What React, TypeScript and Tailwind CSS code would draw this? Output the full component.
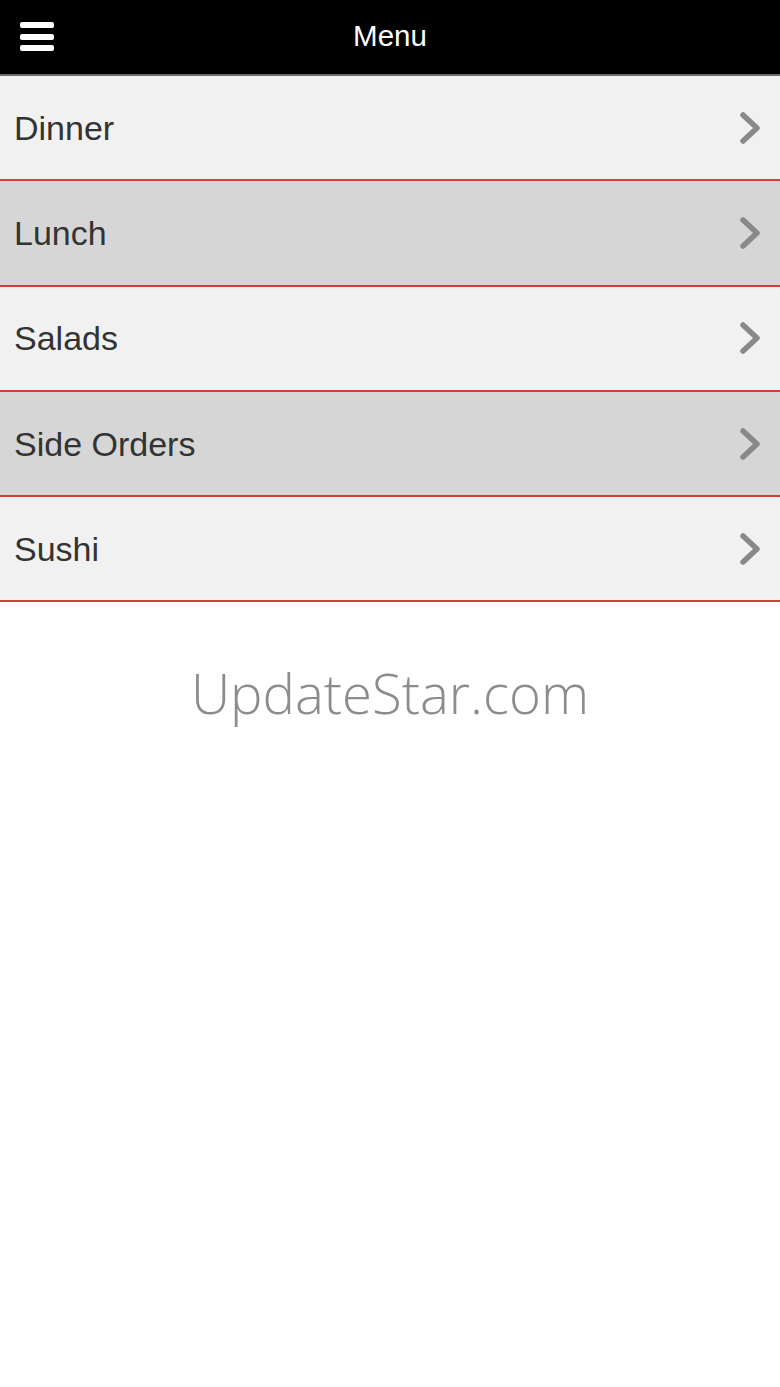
const categories = ["Dinner", "Lunch", "Salads", "Side Orders", "Sushi"];

const Chevron = () => (
  <svg width="26" height="34" viewBox="0 0 26 34" className="shrink-0">
    <polyline
      points="5,4 19,17 5,30"
      fill="none"
      stroke="#898989"
      strokeWidth="5.5"
      strokeLinecap="round"
      strokeLinejoin="round"
    />
  </svg>
);

const App = () => {
  return (
    <div className="min-h-[1387px] w-[780px] bg-white font-['Liberation_Sans',Arial,sans-serif]">
      {/* Header */}
      <div className="relative flex h-[76px] items-center justify-center border-b-2 border-[#6e6e6e] bg-black pb-[3px]">
        <button className="absolute left-[20px] top-[22px] flex w-[34px] flex-col gap-[5.5px]">
          <span className="h-[6px] w-full rounded-[2px] bg-white" />
          <span className="h-[6px] w-full rounded-[2px] bg-white" />
          <span className="h-[6px] w-full rounded-[2px] bg-white" />
        </button>
        <div className="text-[29.5px] leading-none text-white">Menu</div>
      </div>

      {/* Category list */}
      <ul>
        {categories.map((name, i) => (
          <li
            key={name}
            className={`flex h-[105.3px] items-center justify-between border-b-2 border-[#d23f38] pl-[14px] pr-[16px] ${
              i % 2 === 0 ? "bg-[#f1f1f1]" : "bg-[#d6d6d6]"
            }`}
          >
            <span className="text-[34px] leading-none text-[#333333]">{name}</span>
            <Chevron />
          </li>
        ))}
      </ul>

      <div className="mt-[64px] text-center font-['Open_Sans',sans-serif] text-[54.5px] font-light leading-none text-[#8c8c8c]">
        UpdateStar.com
      </div>
    </div>
  );
};

export default App;
